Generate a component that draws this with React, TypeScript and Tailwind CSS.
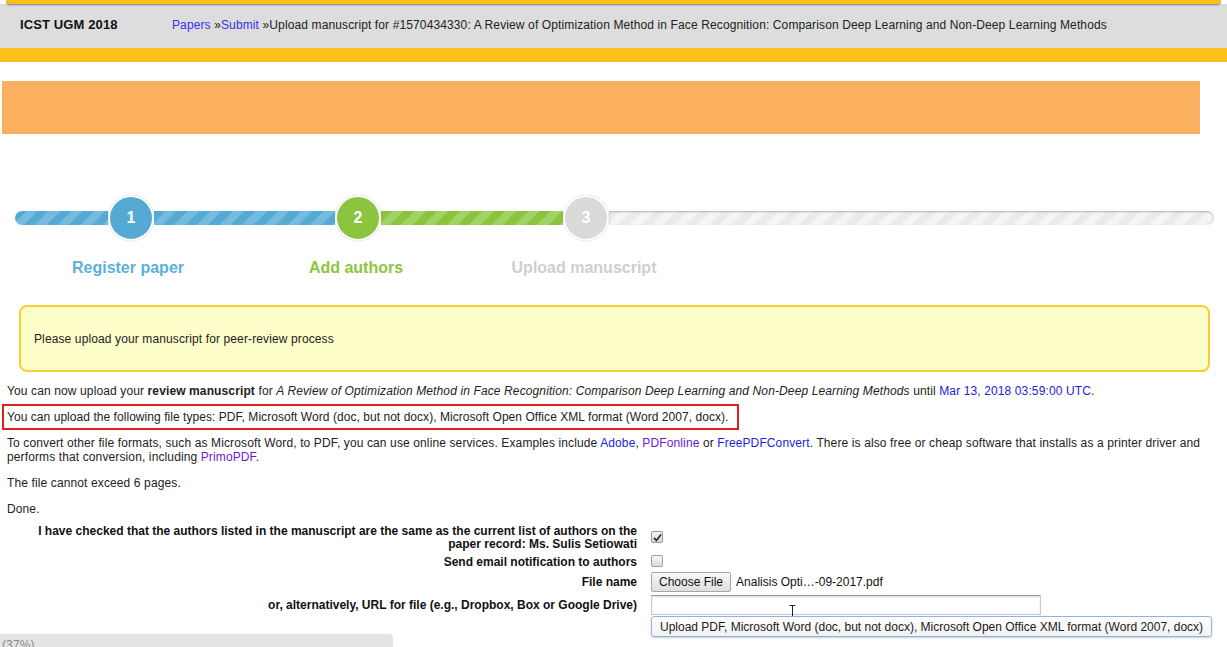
export default function App() {
  return (
    <div className="min-h-[647px] bg-white font-['Liberation_Sans',Arial,sans-serif] text-[12px] tracking-[0.12px] text-[#222] overflow-hidden">
      {/* top yellow strip */}
      <div className="relative z-10 h-[4px] mx-[6px] bg-[#fbbf1b] rounded-b-[5px] shadow-[0_1px_2px_rgba(0,0,0,0.45)]" />
      {/* header */}
      <div className="flex h-[44px] bg-[#dddddd] pt-[13px] leading-[16px]">
        <div className="w-[172px] pl-[20px] text-[13px] font-bold text-[#111]">ICST UGM 2018</div>
        <div className="text-[12px] text-[#222]">
          <span className="text-[#3333ee]">Papers</span> »<span className="text-[#3333ee]">Submit</span> »Upload
          manuscript for #1570434330: A Review of Optimization Method in Face Recognition: Comparison Deep Learning and
          Non-Deep Learning Methods
        </div>
      </div>
      <div className="h-[14px] bg-[#fdc01a]" />

      {/* orange banner */}
      <div className="mt-[19px] ml-[2px] mr-[27px] h-[53px] bg-[#fbb05f]" />

      {/* progress steps */}
      <div className="mt-[61px] ml-[15px] flex items-center">
        <div className="h-[14px] w-[93px] rounded-l-full bg-[repeating-linear-gradient(135deg,#55aad3_0px,#55aad3_8px,#74bbde_8px,#74bbde_16px)]" />
        <div className="flex h-[46px] w-[46px] items-center justify-center rounded-full border-2 border-white bg-[#55aad4] text-[16px] font-bold text-white shadow-[0_0_1px_rgba(0,0,0,0.35)]">
          1
        </div>
        <div className="h-[14px] w-[181px] bg-[repeating-linear-gradient(135deg,#55aad3_0px,#55aad3_8px,#74bbde_8px,#74bbde_16px)]" />
        <div className="flex h-[46px] w-[46px] items-center justify-center rounded-full border-2 border-white bg-[#8bc53f] text-[16px] font-bold text-white shadow-[0_0_1px_rgba(0,0,0,0.35)]">
          2
        </div>
        <div className="h-[14px] w-[182px] bg-[repeating-linear-gradient(135deg,#8ac43d_0px,#8ac43d_8px,#a2d265_8px,#a2d265_16px)]" />
        <div className="flex h-[46px] w-[46px] items-center justify-center rounded-full border-2 border-white bg-[#dadada] text-[16px] font-bold text-white shadow-[0_0_1px_rgba(0,0,0,0.35)]">
          3
        </div>
        <div className="h-[14px] w-[605px] rounded-r-full bg-[repeating-linear-gradient(135deg,#ebebeb_0px,#ebebeb_8px,#f5f5f5_8px,#f5f5f5_16px)] shadow-[inset_0_1px_2px_rgba(0,0,0,0.25)]" />
      </div>
      <div className="mt-[18px] ml-[14px] flex text-[16px] font-bold leading-[18px] tracking-normal">
        <div className="w-[228px] text-center text-[#5cb0d9]">Register paper</div>
        <div className="w-[228px] text-center text-[#8cc63e]">Add authors</div>
        <div className="w-[228px] text-center text-[#cfcfcf]">Upload manuscript</div>
      </div>

      {/* notice */}
      <div className="mt-[28px] ml-[19px] mr-[17px] flex h-[67px] items-center rounded-[8px] border-2 border-[#f8cf30] bg-[#fefecb] pl-[13px]">
        Please upload your manuscript for peer-review process
      </div>

      {/* body text */}
      <div className="flex flex-col px-[2px] leading-[14px]">
        <p className="mt-[12px] pl-[5px]">
          You can now upload your <b>review manuscript</b> for{" "}
          <i>A Review of Optimization Method in Face Recognition: Comparison Deep Learning and Non-Deep Learning Methods</i>{" "}
          until <span className="text-[#2222dd]">Mar 13, 2018 03:59:00 UTC</span>.
        </p>
        <p className="mt-[6px] w-[737px] whitespace-nowrap border-2 border-[#e01e1e] py-[4px] pl-[3px] tracking-[0.05px]">
          You can upload the following file types: PDF, Microsoft Word (doc, but not docx), Microsoft Open Office XML
          format (Word 2007, docx).
        </p>
        <p className="mt-[6px] pl-[5px] pr-[22px]">
          To convert other file formats, such as Microsoft Word, to PDF, you can use online services. Examples include{" "}
          <span className="text-[#2222dd]">Adobe</span>, <span className="text-[#6a1bd1]">PDFonline</span> or{" "}
          <span className="text-[#2222dd]">FreePDFConvert</span>. There is also free or cheap software that installs as a
          printer driver and performs that conversion, including <span className="text-[#6a1bd1]">PrimoPDF</span>.
        </p>
        <p className="mt-[12px] pl-[5px]">The file cannot exceed 6 pages.</p>
        <p className="mt-[12px] pl-[5px]">Done.</p>
      </div>

      {/* form */}
      <div className="mt-[9px] grid grid-cols-[637px_1fr] gap-x-[14px] gap-y-[3px] tracking-normal">
        <div className="pl-[36px] text-right font-bold leading-[13px] text-[#111]">
          I have checked that the authors listed in the manuscript are the same as the current list of authors on the
          paper record: Ms. Sulis Setiowati
        </div>
        <div className="pt-[6px]">
          <span className="flex h-[12px] w-[12px] items-center justify-center rounded-[2px] border border-[#9a9a9a] bg-[linear-gradient(#f4f4f4,#d8d8d8)]">
            <svg width="9" height="9" viewBox="0 0 9 9">
              <path d="M1 5 L3.5 7.5 L8 1.5" fill="none" stroke="#333" strokeWidth="1.8" />
            </svg>
          </span>
        </div>

        <div className="flex h-[15px] items-center justify-end font-bold text-[#111]">
          Send email notification to authors
        </div>
        <div className="flex h-[15px] items-start">
          <span className="mt-[1px] h-[12px] w-[12px] rounded-[2px] border border-[#a0a0a0] bg-[linear-gradient(#f6f6f6,#dcdcdc)]" />
        </div>

        <div className="flex h-[20px] items-center justify-end font-bold text-[#111]">File name</div>
        <div className="flex h-[20px] items-center">
          <span className="flex h-[20px] shrink-0 items-center whitespace-nowrap rounded-[2px] border border-[#a6a6a6] bg-[linear-gradient(#f7f7f7,#dedede)] px-[7px] text-[#111]">
            Choose File
          </span>
          <span className="ml-[5px] whitespace-nowrap text-[#111]">Analisis Opti…-09-2017.pdf</span>
        </div>

        <div className="flex h-[20px] items-center justify-end font-bold text-[#111]">
          or, alternatively, URL for file (e.g., Dropbox, Box or Google Drive)
        </div>
        <div className="relative h-[20px]">
          <div className="h-[20px] w-[390px] border border-[#c8c8c8] border-t-[#999] bg-white shadow-[inset_0_1px_2px_rgba(0,0,0,0.15)]" />
          <svg className="absolute left-[138px] top-[10px]" width="7" height="16" viewBox="0 0 7 16">
            <path d="M0.5 0.5 H6.5 M3.5 0.5 V15.5 M0.5 15.5 H6.5" fill="none" stroke="#222" strokeWidth="1" />
          </svg>
          <div className="absolute left-0 top-[21px] flex h-[21px] w-[561px] items-center whitespace-nowrap rounded-[3px] border border-[#8fb2de] bg-[linear-gradient(#ffffff,#f2f2f2)] pl-[8px] text-[#1a1a1a] shadow-[0_1px_2px_rgba(0,0,0,0.2)]">
            Upload PDF, Microsoft Word (doc, but not docx), Microsoft Open Office XML format (Word 2007, docx)
          </div>
        </div>
      </div>

      {/* status bar */}
      <div className="mt-[19px] h-[20px] w-[393px] rounded-tr-[4px] bg-[#e4e4e4] pl-[2px] pt-[4px] leading-[14px] text-[#888]">
        (37%)
      </div>
    </div>
  );
}
